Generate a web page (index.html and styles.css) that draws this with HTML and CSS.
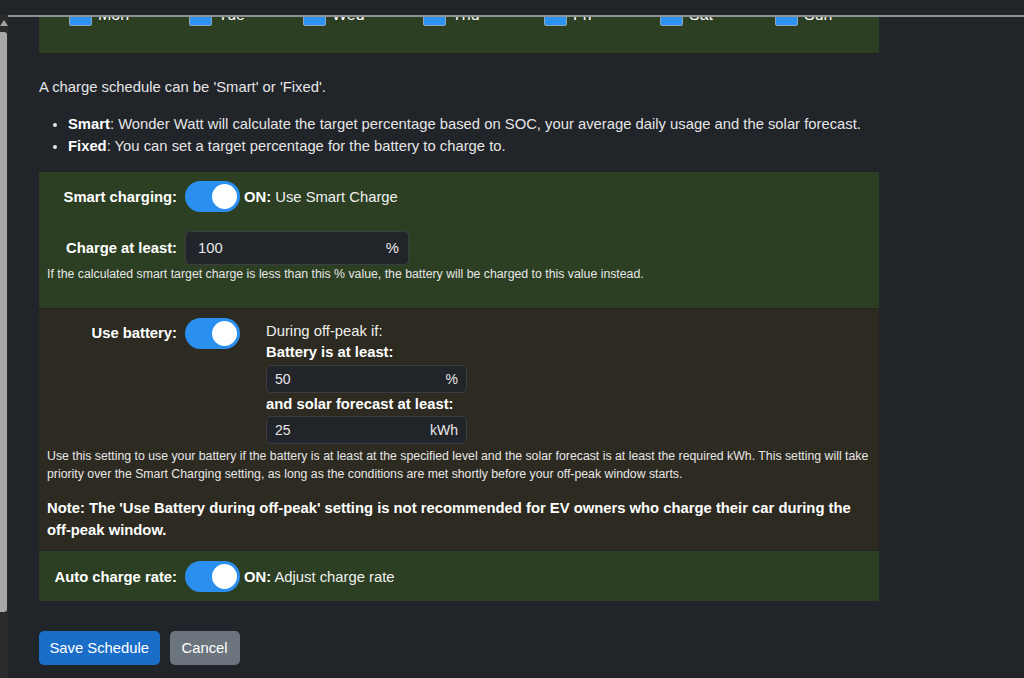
FILE: index.html
```html
<!DOCTYPE html>
<html>
<head>
<meta charset="utf-8">
<link rel="stylesheet" href="styles.css">
</head>
<body>
<div class="topbar"><div class="topline"></div></div>
<div class="shell">
  <div class="scrollbar">
    <div class="sb-arrow"></div>
    <div class="sb-thumb"></div>
  </div>
  <main class="content">
    <section class="panel green days">
      <label class="day"><span class="cb"></span>Mon</label>
      <label class="day"><span class="cb"></span>Tue</label>
      <label class="day"><span class="cb"></span>Wed</label>
      <label class="day"><span class="cb"></span>Thu</label>
      <label class="day"><span class="cb"></span>Fri</label>
      <label class="day"><span class="cb"></span>Sat</label>
      <label class="day"><span class="cb"></span>Sun</label>
    </section>

    <p class="intro">A charge schedule can be 'Smart' or 'Fixed'.</p>
    <ul class="modes">
      <li><b>Smart</b>: Wonder Watt will calculate the target percentage based on SOC, your average daily usage and the solar forecast.</li>
      <li><b>Fixed</b>: You can set a target percentage for the battery to charge to.</li>
    </ul>

    <section class="panel green smart">
      <div class="row">
        <div class="lbl">Smart charging:</div>
        <div class="toggle"><span class="knob"></span></div>
        <div class="state"><b>ON:</b> Use Smart Charge</div>
      </div>
      <div class="row row-input">
        <div class="lbl">Charge at least:</div>
        <div class="ig ig-lg"><span class="val">100</span><span class="unit">%</span></div>
      </div>
      <div class="help">If the calculated smart target charge is less than this % value, the battery will be charged to this value instead.</div>
    </section>

    <section class="panel brown battery">
      <div class="row top">
        <div class="lbl lbl-top">Use battery:</div>
        <div class="toggle"><span class="knob"></span></div>
        <div class="cond">
          <div class="cond-title">During off-peak if:</div>
          <div class="cond-lbl">Battery is at least:</div>
          <div class="ig ig-sm"><span class="val">50</span><span class="unit">%</span></div>
          <div class="cond-lbl">and solar forecast at least:</div>
          <div class="ig ig-sm"><span class="val">25</span><span class="unit">kWh</span></div>
        </div>
      </div>
      <div class="help help2">Use this setting to use your battery if the battery is at least at the specified level and the solar forecast is at least the required kWh. This setting will take priority over the Smart Charging setting, as long as the conditions are met shortly before your off-peak window starts.</div>
      <div class="note">Note: The 'Use Battery during off-peak' setting is not recommended for EV owners who charge their car during the off-peak window.</div>
    </section>

    <section class="panel green auto">
      <div class="row">
        <div class="lbl">Auto charge rate:</div>
        <div class="toggle"><span class="knob"></span></div>
        <div class="state"><b>ON:</b> Adjust charge rate</div>
      </div>
    </section>

    <div class="actions">
      <button class="btn btn-primary">Save Schedule</button>
      <button class="btn btn-secondary">Cancel</button>
    </div>
  </main>
</div>
</body>
</html>
```
FILE: styles.css
```css
html, body {
  margin: 0;
  padding: 0;
  height: 100%;
  overflow: hidden;
}
body {
  background: #212429;
  color: #e9ecef;
  font-family: "Liberation Sans", Arial, sans-serif;
  font-size: 14.8px;
  line-height: 22px;
}
.topbar {
  position: fixed;
  top: 0;
  left: 0;
  right: 0;
  height: 15px;
  background: #212429;
  z-index: 5;
}
.topline {
  position: absolute;
  left: 8px;
  right: 0;
  top: 15px;
  height: 2px;
  background: #8f9194;
}
.shell {
  display: flex;
  height: 100%;
}
.scrollbar {
  width: 8px;
  flex: none;
  background: #2a2b2d;
  position: relative;
}
.sb-arrow {
  position: absolute;
  left: 0;
  top: 20px;
  width: 0;
  height: 0;
  border-left: 4px solid transparent;
  border-right: 4px solid transparent;
  border-bottom: 6px solid #a3a3a3;
}
.sb-thumb {
  position: absolute;
  left: 0;
  top: 32px;
  width: 7px;
  height: 580px;
  background: #a8a8a8;
  border-radius: 0 3px 3px 0;
}
.content {
  width: 840px;
  padding-left: 31px;
}
.panel {
  box-sizing: border-box;
}
.green { background: #2c3f23; }
.brown { background: #2d2b21; }

.days {
  display: flex;
  margin-top: 3px;
  padding: 0 0 27px 30px;
  height: 50px;
}
.day {
  display: flex;
  flex: none;
  align-items: center;
  width: 120px;
  height: 23px;
  font-size: 16px;
  color: #fff;
  gap: 6px;
}
.day:nth-child(2) { width: 114px; }
.day:nth-child(3) { width: 120px; }
.day:nth-child(4) { width: 121px; }
.day:nth-child(5) { width: 116px; }
.day:nth-child(6) { width: 115px; }
.cb {
  width: 21px;
  height: 21px;
  background: #2a93f3;
  border: 1px solid #8fa6b8;
  border-radius: 2px;
}

.intro {
  margin: 23px 0 15px;
  color: #e6e6e6;
}
.modes {
  margin: 0 0 15px;
  padding-left: 29px;
  color: #e6e6e6;
}
.modes b { color: #fff; }

.row {
  display: flex;
  align-items: center;
}
.lbl {
  width: 130px;
  margin-left: 8px;
  margin-right: 8px;
  text-align: right;
  font-weight: bold;
  color: #fff;
  flex: none;
}
.lbl-top {
  line-height: 31px;
}
.toggle {
  width: 55px;
  height: 31px;
  border-radius: 16px;
  background: #2b8ff0;
  position: relative;
  flex: none;
}
.knob {
  position: absolute;
  right: 3px;
  top: 3px;
  width: 25px;
  height: 25px;
  border-radius: 50%;
  background: #fff;
}
.state {
  margin-left: 4px;
  color: #f0f0f0;
}
.state b { color: #fff; }

.smart {
  padding: 9px 0 25px;
}
.row-input {
  margin-top: 19px;
}
.ig {
  display: flex;
  align-items: center;
  justify-content: space-between;
  box-sizing: border-box;
  background: #212429;
  border: 1px solid #3a3e44;
  border-radius: 5px;
  color: #e8e8e8;
}
.ig-lg {
  width: 224px;
  height: 34px;
  padding: 0 9px 0 12px;
}
.ig-sm {
  width: 201px;
  height: 28px;
  padding: 0 8px 0 8px;
  font-size: 14px;
}
.help {
  font-size: 12.3px;
  line-height: 18px;
  margin-left: 8px;
  margin-right: 8px;
  color: #e6e6e6;
}

.battery {
  margin-top: 1px;
  padding: 9px 0 9px;
}
.row.top {
  align-items: flex-start;
}
.cond {
  margin-left: 26px;
  margin-top: 3px;
  line-height: 21px;
  color: #f0f0f0;
}
.cond-lbl {
  font-weight: bold;
  color: #fff;
}
.cond-title + .cond-lbl { margin-bottom: 2px; }
.cond .ig + .cond-lbl { margin-top: 1px; margin-bottom: 1px; }
.help2 {
  margin-top: 3px;
}
.note {
  margin: 14px 8px 0;
  font-weight: bold;
  color: #fff;
}

.auto {
  margin-top: 1px;
  padding: 10px 0 9px;
}

.actions {
  display: flex;
  gap: 10px;
  margin-top: 30px;
}
.btn {
  font-family: "Liberation Sans", Arial, sans-serif;
  font-size: 14.8px;
  height: 34px;
  padding: 0 10.5px;
  border: none;
  border-radius: 5px;
  color: #fff;
}
.btn-primary { background: #1b6ec8; }
.btn-secondary { background: #6c757d; padding: 0 12px; }
```
